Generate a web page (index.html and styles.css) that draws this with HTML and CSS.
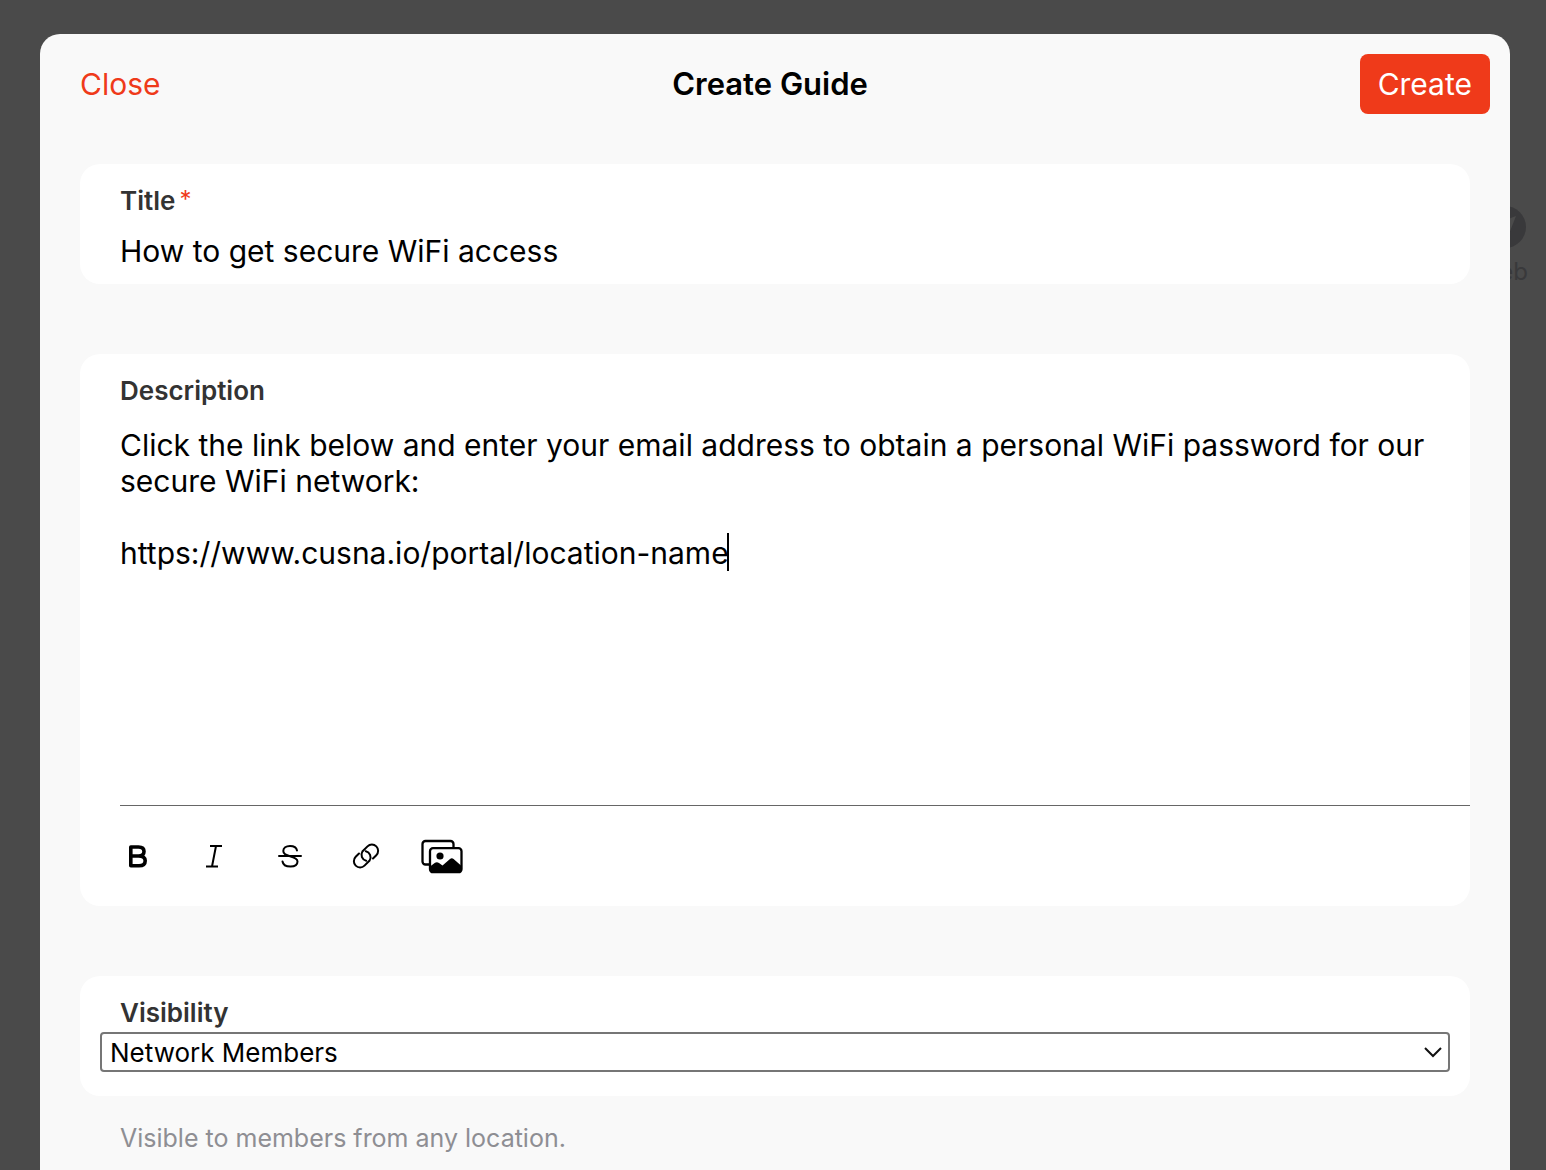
FILE: index.html
```html
<!DOCTYPE html>
<html lang="en">
<head>
<meta charset="utf-8">
<meta name="viewport" content="width=device-width, initial-scale=1">
<title>Create Guide</title>
<link rel="stylesheet" href="styles.css">
</head>
<body>
<nav class="backdrop-nav" aria-hidden="true">
  <div class="nav-item">
    <svg class="nav-icon" viewBox="0 0 44 42"><circle cx="21" cy="21" r="21" fill="#39393b"/><path d="M32 10 23 33 19 23 9 19Z" fill="#4b4b4b"/></svg>
    <span>Web</span>
  </div>
</nav>
<form class="modal">
  <header class="modal-header">
    <button type="button" class="close">Close</button>
    <h1 class="heading">Create Guide</h1>
    <button type="button" class="create">Create</button>
  </header>
  <main class="fields">
    <section class="card title-card">
      <label class="label" for="title">Title<span class="required">*</span></label>
      <input class="text-input" id="title" type="text" value="How to get secure WiFi access">
    </section>
    <section class="card description-card">
      <label class="label" for="description">Description</label>
      <div class="editor">
        <textarea class="description" id="description" spellcheck="false">Click the link below and enter your email address to obtain a personal WiFi password for our secure WiFi network:

https://www.cusna.io/portal/location-name</textarea>
        <span class="caret"></span>
      </div>
      <div class="toolbar">
        <button type="button" class="tool" aria-label="Bold"><svg width="36" height="36" viewBox="0 0 36 36" fill="none" stroke="#000" stroke-width="3.600" stroke-linejoin="round"><path d="M10.800 9H18.500C22 9 24 10.600 24 13.500C24 16.500 22 18 18.500 18C23 18 25.200 19.800 25.200 22.800C25.200 26 22.800 27.800 19 27.800H10.800ZM11 18H19"/></svg></button>
        <button type="button" class="tool" aria-label="Italic"><svg width="36" height="36" viewBox="0 0 36 36" fill="none" stroke="#000" stroke-width="2"><path d="M14 8H26M10 28.500H22M20 8 16 28.500"/></svg></button>
        <button type="button" class="tool" aria-label="Strikethrough"><svg width="36" height="36" viewBox="0 0 36 36" fill="none" stroke="#000" stroke-width="2" stroke-linecap="round"><path d="M25 12.500C24.500 9.800 21.800 8 18 8C14 8 11.300 10 11.300 13C11.300 16 13.500 17 18 18.200C23 19.500 25.500 20.700 25.500 23.500C25.500 26.700 22.500 28.500 18.500 28.500C14.300 28.500 11 26.500 10.500 23.500M7 18H29"/></svg></button>
        <button type="button" class="tool" aria-label="Link"><svg width="36" height="36" viewBox="0 0 36 36" fill="none" stroke="#000" stroke-width="2" stroke-linecap="round"><path d="M11 15.500 7.700 18.800A6.200 6.200 0 0 0 16.500 27.600L21.600 22.500A6.200 6.200 0 0 0 17.800 13.200M25 20.500 28.300 17.200A6.200 6.200 0 0 0 19.500 8.400L14.400 13.500A6.200 6.200 0 0 0 18.200 22.800"/></svg></button>
        <button type="button" class="tool" aria-label="Images"><svg width="44" height="36" viewBox="8 0 44 36" overflow="visible"><rect x="6.500" y="3" width="31" height="23.500" rx="3" fill="#fff" stroke="#000" stroke-width="2.300"/><rect x="14" y="10.200" width="31.500" height="24" rx="3" fill="#fff" stroke="#000" stroke-width="2.300"/><circle cx="24" cy="18" r="3.600"/><path d="M14 28.500 19 24.800Q21 23.500 23 25L26.500 27.500 34 21Q35.800 19.500 37.600 21L45 27.500V31Q45 34.500 42 34.500H17Q14 34.500 14 31Z"/></svg></button>
      </div>
    </section>
    <section class="visibility-group">
      <div class="card visibility-card">
        <label class="label" for="visibility">Visibility</label>
        <div class="select-wrap">
          <select class="select" id="visibility"><option>Network Members</option></select>
          <svg class="chevron" width="18" height="12" viewBox="0 0 18 12" fill="none" stroke="#111" stroke-width="2"><path d="M1 2 9 10 17 2"/></svg>
        </div>
      </div>
      <p class="hint">Visible to members from any location.</p>
    </section>
  </main>
</form>
</body>
</html>
```
FILE: styles.css
```css
* { box-sizing: border-box; }

body {
  margin: 0;
  min-height: 100vh;
  overflow: hidden;
  display: flex;
  padding: 34px 36px 0 40px;
  background: #4a4a4a;
  color: #000;
  font-family: Inter, "Liberation Sans", sans-serif;
  font-weight: 400;
}

button, input, textarea, select { font: inherit; color: inherit; }
button { border: 0; background: none; }

.backdrop-nav {
  position: absolute;
  top: 206px;
  right: 18px;
  color: #39393b;
  font-size: 24px;
  line-height: 28px;
}
.nav-item { display: flex; flex-direction: column; align-items: flex-end; gap: 10px; }
.nav-icon { width: 44px; height: 42px; display: block; }

.modal {
  position: relative;
  flex: 1;
  min-width: 0;
  border-radius: 20px 20px 0 0;
  background: #f9f9f9;
}
.modal-header {
  display: flex;
  justify-content: space-between;
  align-items: center;
  padding: 20px;
  font-size: 30px;
  line-height: 40px;
}
.close { padding: 0 20px; color: #ef3a1a; }
.heading { margin: 0; font-size: 31px; font-weight: 600; }
.create {
  padding: 10px 18px;
  border-radius: 8px;
  background: #ef3a1a;
  color: #fff;
}

.fields {
  display: flex;
  flex-direction: column;
  gap: 70px;
  padding: 30px 40px 0;
}
.card {
  display: flex;
  flex-direction: column;
  border-radius: 20px;
  background: #fff;
}
.title-card, .description-card { padding: 20px 0 0 40px; }
.label {
  color: #333;
  font-size: 26px;
  font-weight: 600;
  line-height: 34px;
}
.required {
  margin-left: 4px;
  color: #ef3a1a;
  font-size: 24px;
  font-weight: 400;
  line-height: 24px;
  vertical-align: 2px;
}

.text-input {
  height: 66px;
  padding: 0 40px 0 0;
  border: 0;
  outline: 0;
  background: none;
  font-size: 30px;
}

.editor { position: relative; display: flex; border-bottom: 1px solid #666; }
.description {
  flex: 1;
  height: 397px;
  padding: 19px 20px 0 0;
  border: 0;
  outline: 0;
  resize: none;
  background: none;
  font-size: 30px;
  line-height: 36px;
}
.caret { position: absolute; top: 125px; left: 607px; width: 2px; height: 38px; background: #000; }

.toolbar { display: flex; gap: 40px; height: 100px; align-items: center; }
.tool { display: flex; padding: 0; }

.visibility-card { padding: 20px 20px 24px; }
.visibility-card .label { padding-left: 20px; }
.select-wrap { display: grid; align-items: center; padding-top: 2px; }
.select {
  grid-area: 1 / 1;
  height: 40px;
  padding: 0 8px;
  border: 2px solid #767676;
  border-radius: 4px;
  appearance: none;
  background: #fff;
  font-size: 26px;
}
.chevron { grid-area: 1 / 1; justify-self: end; margin-right: 8px; pointer-events: none; }
.hint {
  margin: 24px 40px;
  color: #8e8e93;
  font-size: 25px;
  line-height: 36px;
}
```
